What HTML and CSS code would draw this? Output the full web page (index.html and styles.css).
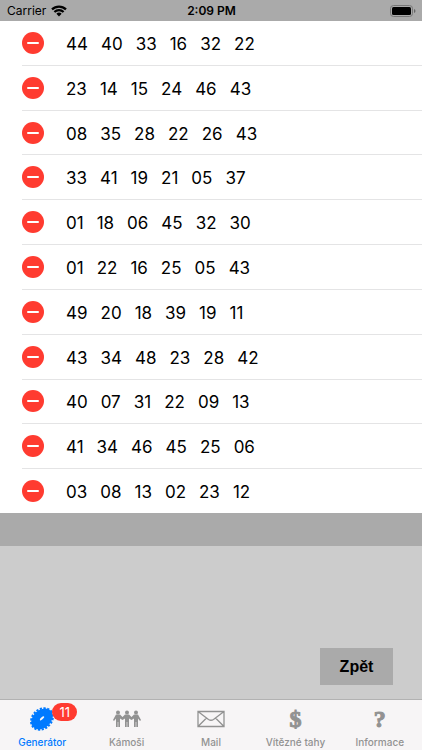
FILE: index.html
```html
<!DOCTYPE html>
<html lang="cs">
<head>
    <meta charset="utf-8">
    <meta name="viewport" content="width=device-width, initial-scale=1">
    <title>Generátor</title>
    <link rel="stylesheet" href="styles.css">
</head>
<body>
    <header class="status-bar">
        <div class="carrier">
            <span>Carrier</span>
            <svg class="wifi" viewBox="0 0 16 12" aria-hidden="true">
                <path d="M1 4.400a10 10 0 0 1 14 0M3.400 7a6.600 6.600 0 0 1 9.200 0" fill="none" stroke="#000" stroke-width="2.200"/>
                <path d="M5.400 8.800a3.800 3.800 0 0 1 5.200 0L8 11.600z"/>
            </svg>
        </div>
        <span class="clock">2:09 PM</span>
        <svg class="battery" viewBox="0 0 26 12" aria-hidden="true">
            <rect x="0.5" y="0.5" width="22" height="11" rx="3" fill="none" stroke="#777"/>
            <rect x="2" y="2" width="19" height="8" rx="1.5"/>
            <path d="M24 4v4q1.500-.6 1.500-2T24 4z" fill="#666"/>
        </svg>
    </header>

    <main class="content">
        <ul class="draws" id="draws"></ul>
        <div class="band"></div>
        <div class="panel">
            <button type="button" class="back">Zpět</button>
        </div>
    </main>

    <nav class="tab-bar">
        <a href="#" class="tab active">
            <span class="tab-icon">
                <svg viewBox="0 0 28 28" aria-hidden="true">
                    <g transform="rotate(-42 14 14)">
                        <ellipse cx="14" cy="14" rx="12" ry="9" fill="currentColor"/>
                        <ellipse cx="14" cy="14" rx="12" ry="9.500" fill="none" stroke="currentColor" stroke-width="2" stroke-dasharray="2.200 1.500"/>
                        <ellipse cx="14.500" cy="13.500" rx="2.800" ry="1.100" fill="#f7f5f6"/>
                    </g>
                </svg>
                <span class="badge">11</span>
            </span>
            <span>Generátor</span>
        </a>
        <a href="#" class="tab">
            <span class="tab-icon">
                <svg viewBox="0 0 28 28" aria-hidden="true">
                    <g fill="currentColor">
                        <circle cx="5" cy="7.500" r="2"/>
                        <circle cx="14" cy="7.500" r="2"/>
                        <circle cx="23" cy="7.500" r="2"/>
                        <path d="M3 9.500h4l2.500 2.500L12 9.500h4l2.500 2.500L21 9.500h4l3 5.500-1 1-2-2.500V22h-1.700v-5h-.6v5H21v-8.500l-2.500 1.500-2.500-1.500V22h-1.700v-5h-.6v5H12v-8.500L9.500 15 7 13.500V22H5.300v-5h-.6v5H3v-8.500L1 16l-1-1z"/>
                    </g>
                </svg>
            </span>
            <span>Kámoši</span>
        </a>
        <a href="#" class="tab">
            <span class="tab-icon">
                <svg viewBox="0 0 28 28" aria-hidden="true">
                    <path d="M1 6.500h26v15H1zM1 6.500l10.500 8q2.500 1.500 5 0L27 6.500M1 21.500l8.500-8.500M27 21.500L18.500 13" fill="none" stroke="currentColor" stroke-width="1.300"/>
                </svg>
            </span>
            <span>Mail</span>
        </a>
        <a href="#" class="tab">
            <span class="tab-icon symbol" aria-hidden="true">$</span>
            <span>Vítězné tahy</span>
        </a>
        <a href="#" class="tab">
            <span class="tab-icon symbol" aria-hidden="true">?</span>
            <span>Informace</span>
        </a>
    </nav>

    <script src="script.js"></script>
</body>
</html>
```

FILE: styles.css
```css
* { box-sizing: border-box; }
body { display: flex; flex-direction: column; min-height: 100vh; margin: 0; font-family: Inter, "Liberation Sans", sans-serif; color: #000; background: #ccc; }

.status-bar { display: grid; grid-template-columns: 1fr auto 1fr; align-items: center; height: 21px; padding: 0 6px 0 7px; background: #aaa; font-size: 12px; }
.carrier { display: flex; align-items: center; gap: 5px; }
.wifi { width: 16px; height: 12px; }
.clock { font-weight: 600; }
.battery { width: 26px; height: 12px; justify-self: end; }

.content { flex: 1; display: flex; flex-direction: column; }
.draws { flex: 1; display: flex; flex-direction: column; margin: 0; padding: 0; list-style: none; background: #fff; }
.draw { flex: 1; display: flex; align-items: center; gap: 22px; min-height: 40px; margin-left: 22px; border-bottom: 1px solid #e4e4e5; }
.draw:last-child { border-bottom: 0; }
.remove { display: flex; align-items: center; justify-content: center; width: 22px; height: 22px; padding: 0; border: none; border-radius: 50%; background: #ff3b30; cursor: pointer; }
.remove::before { content: ""; width: 12px; height: 2px; border-radius: 1px; background: #fff; }
.numbers { display: flex; gap: 13px; padding-top: 2px; font-size: 17px; line-height: 22px; }

.band { height: 33px; background: #aaa; }
.panel { display: flex; justify-content: flex-end; align-items: flex-end; height: 153px; padding: 0 29px 14px; }
.back { width: 73px; height: 37px; padding: 0; border: none; background: #aaa; color: #000; font: bold 16px "Liberation Sans", Arial, sans-serif; cursor: pointer; }

.tab-bar { display: grid; grid-template-columns: repeat(5, 1fr); height: 51px; border-top: 1px solid #b2b2b2; background: #f7f5f6; }
.tab { display: flex; flex-direction: column; align-items: center; padding-top: 5px; color: #929292; font-size: 10px; font-weight: 500; line-height: 14px; text-decoration: none; white-space: nowrap; }
.tab.active { color: #007aff; }
.tab-icon { position: relative; width: 28px; height: 30px; }
.tab-icon svg { display: block; width: 28px; height: 28px; }
.symbol { font: bold 24px/28px "Liberation Serif", serif; text-align: center; -webkit-text-stroke: 1px currentColor; }
.badge { position: absolute; top: -2px; left: 24px; width: 25px; height: 18px; border-radius: 9px; background: #ff3b30; color: #fff; font-size: 13px; font-weight: 400; line-height: 18px; text-align: center; }
```

FILE: script.js
```js
const draws = [
    '44 40 33 16 32 22',
    '23 14 15 24 46 43',
    '08 35 28 22 26 43',
    '33 41 19 21 05 37',
    '01 18 06 45 32 30',
    '01 22 16 25 05 43',
    '49 20 18 39 19 11',
    '43 34 48 23 28 42',
    '40 07 31 22 09 13',
    '41 34 46 45 25 06',
    '03 08 13 02 23 12'
];

const list = document.getElementById('draws');

draws.forEach((draw) => {
    const item = document.createElement('li');
    item.className = 'draw';
    const numbers = draw.split(' ').map((n) => '<span>' + n + '</span>').join('');
    item.innerHTML = '<button type="button" class="remove" aria-label="Smazat"></button>' +
        '<div class="numbers">' + numbers + '</div>';
    list.appendChild(item);
});
```
